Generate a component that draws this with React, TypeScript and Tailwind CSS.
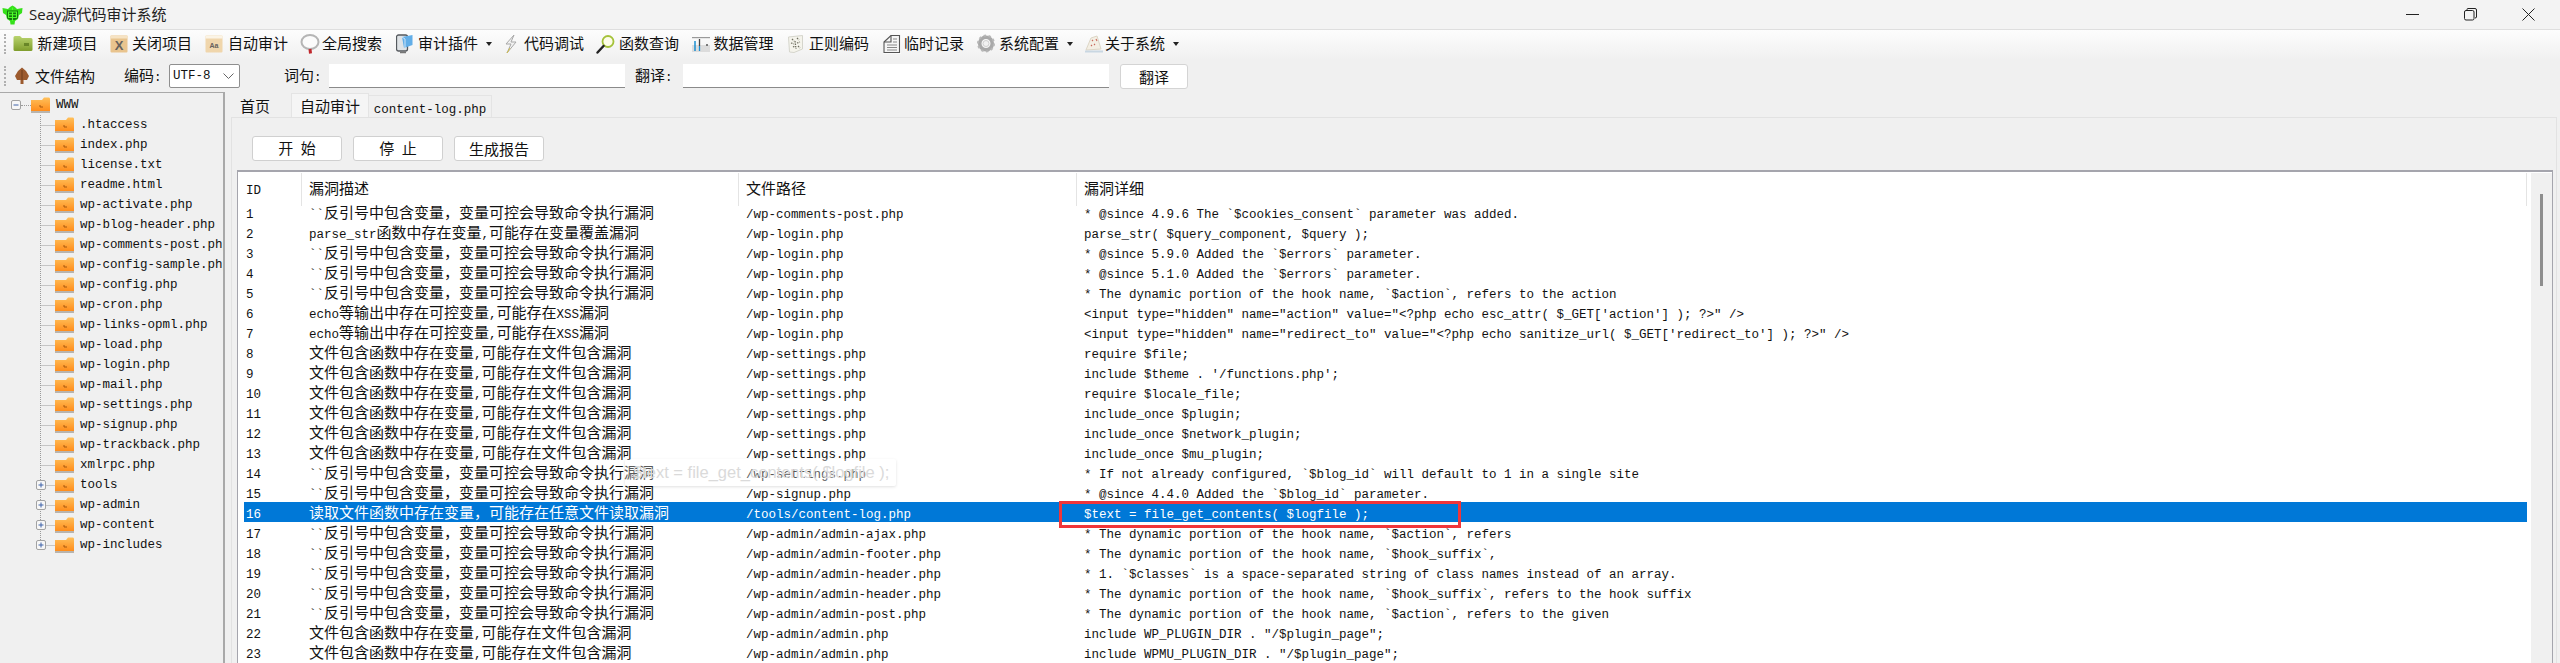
import React from 'react'

const LATIN = "font-['Liberation_Mono',monospace] text-[12.5px]"

// SimSun-like mix: latin runs are half the width of the CJK ones
function T({ children }: { children: string }) {
  return (
    <>
      {children.split(/([\u0000-\u00ff]+)/).map((run, i) =>
        /^[\u0000-\u00ff]+$/.test(run) ? (
          <span key={i} className={LATIN}>{run}</span>
        ) : (
          <span key={i}>{run}</span>
        ),
      )}
    </>
  )
}

function Logo() {
  return (
    <svg width="21" height="20" viewBox="0 0 21 20" className="shrink-0">
      <path d="M10.500 0.500 L13 2 L15 4 L20.500 3 L20 8 L17 10 L16 14 L13 16 L12.500 19.500 L8.500 19.500 L8 16 L5 14 L4 10 L1 8 L0.500 3 L6 4 L8 2 Z" fill="#35e01a" />
      <path d="M5 5.500 H16 V13 L13 15 H8 L5 13 Z" fill="#16720f" />
      <path d="M10.500 2.500 V5 M6.500 7 H14.500 V12.500 H6.500 Z M10.500 7 V16 M6.500 9.800 H14.500" stroke="#4dff2a" strokeWidth="1.100" fill="none" />
    </svg>
  )
}

function IconNew() {
  return (
    <svg width="20" height="17" viewBox="0 0 20 17">
      <defs>
        <linearGradient id="gn" x1="0" y1="0" x2="0" y2="1">
          <stop offset="0" stopColor="#b9d46f" />
          <stop offset="1" stopColor="#7f9d2c" />
        </linearGradient>
      </defs>
      <path d="M0.500 2.500 Q0.500 1 2 1 H7 L9 3 H18 Q19.500 3 19.500 4.500 V14.500 Q19.500 16 18 16 H2 Q0.500 16 0.500 14.500 Z" fill="url(#gn)" />
      <rect x="11" y="8" width="5" height="3" fill="#5c7a1f" opacity=".8" />
    </svg>
  )
}

function IconTan({ label, light }: { label: string; light?: boolean }) {
  return (
    <svg width="18" height="18" viewBox="0 0 18 18">
      <rect x="0.500" y="0.500" width="17" height="17" rx="1" fill={light ? '#f0d6ac' : '#e9c48e'} />
      <rect x="0.500" y="0.500" width="17" height="3" fill={light ? '#fbf4e6' : '#f6e3c4'} />
      <text x="9" y={light ? 13 : 15} textAnchor="middle" fontSize={light ? 7 : 13} fontWeight="700" fontFamily="Liberation Sans, sans-serif" fill="#66615c">
        {label}
      </text>
    </svg>
  )
}

function IconSearch() {
  return (
    <svg width="20" height="20" viewBox="0 0 20 20">
      <ellipse cx="10" cy="8" rx="8.500" ry="7" fill="#fbfbfb" stroke="#b5b5b5" strokeWidth="2" />
      <path d="M10 15 L10.500 19.500" stroke="#c0282d" strokeWidth="3" />
    </svg>
  )
}

function IconPlugin() {
  return (
    <svg width="18" height="20" viewBox="0 0 18 20">
      <rect x="0.500" y="1" width="11" height="16" rx="2" fill="#dfe3e6" stroke="#55595e" strokeWidth="1.300" />
      <path d="M4 18.500 H10" stroke="#777" strokeWidth="1.500" />
      <path d="M6 3 L16.500 1 V11 L8 14 Z" fill="#62aee8" />
      <path d="M6 3 L9 5 V14" fill="none" stroke="#cfe6f8" />
    </svg>
  )
}

function IconBolt() {
  return (
    <svg width="14" height="20" viewBox="0 0 14 20">
      <path d="M10 1 L2 10 L7 10 L3 19 L12 8 L7 8 Z" fill="#f2f2f2" stroke="#a8a8a8" strokeWidth="1" />
      <path d="M6 14 L3 19" stroke="#d4c14c" strokeWidth="1" />
    </svg>
  )
}

function IconLens() {
  return (
    <svg width="19" height="20" viewBox="0 0 19 20">
      <circle cx="12" cy="7.500" r="5.500" fill="#fdfde8" stroke="#a5c23a" strokeWidth="1.800" />
      <path d="M7.500 12 L1.500 18.500" stroke="#222" strokeWidth="2.400" strokeLinecap="round" />
    </svg>
  )
}

function IconData() {
  return (
    <svg width="18" height="16" viewBox="0 0 18 16">
      <rect x="0" y="9" width="18" height="7" fill="#dcdcdc" />
      <rect x="0" y="1" width="18" height="1.200" fill="#9a9a9a" />
      <path d="M3 5 V15" stroke="#1d8fd0" strokeWidth="1.500" />
      <path d="M7.500 3 V10" stroke="#444" strokeWidth="1.300" />
      <path d="M7.500 10 V15" stroke="#1d8fd0" strokeWidth="1.300" />
      <path d="M14 9 H16" stroke="#555" strokeWidth="1.500" />
    </svg>
  )
}

function IconRegex() {
  return (
    <svg width="15" height="18" viewBox="0 0 15 18">
      <path d="M0.500 2 L14.500 0.500 V14 L6 17.500 L1.500 17 Z" fill="#f5f4ec" stroke="#d5d5cc" />
      <path d="M4 4 L6 6 M9 3 L11 5 M3 8 L6 9 M9 8 L12 7 M5 12 L7 11 M10 11 L12 13 M7 6 L8 14" stroke="#6f6f60" strokeWidth="1.300" strokeDasharray="1.500 1" />
    </svg>
  )
}

function IconTemp() {
  return (
    <svg width="18" height="20" viewBox="0 0 18 20">
      <rect width="18" height="20" fill="#fafafa" />
      <path d="M1 8 L8 1.500 H16.500 V18.500 H1 Z" fill="#f6f6f6" stroke="#555" strokeWidth="1.100" />
      <path d="M1 8 H8 V1.500" fill="none" stroke="#555" strokeWidth="1.100" />
      <path d="M4 11 H14 M4 13.500 H14 M4 16 H14 M10 5 H14 M10 8 H14" stroke="#888" />
    </svg>
  )
}

function IconGear() {
  return (
    <svg width="18" height="19" viewBox="0 0 18 19">
      <circle cx="9" cy="9.500" r="6.300" fill="none" stroke="#a9a9a9" strokeWidth="3.600" />
      <circle cx="9" cy="9.500" r="8" fill="none" stroke="#b8b8b8" strokeWidth="2" strokeDasharray="2.500 2.500" />
      <circle cx="9" cy="9.500" r="3" fill="#f2f2f2" stroke="#d0d0d0" />
    </svg>
  )
}

function IconAbout() {
  return (
    <svg width="18" height="18" viewBox="0 0 18 18">
      <path d="M1 15 L6 3 L12 1 L16 14 Z" fill="#f4efe4" stroke="#ddd6c6" />
      <path d="M7 5 L8 6 M11 4 L12 6 M9 9 L10 10 M6 10 L7 11" stroke="#c8695c" strokeWidth="1.100" />
      <path d="M0 15.500 H18 V17.500 H0 Z" fill="#c9d7e2" />
    </svg>
  )
}

const toolbarItems = [
  { icon: <IconNew />, label: '新建项目', w: 'w-[97px]', slot: 'w-[24.5px]' },
  { icon: <IconTan label="X" />, label: '关闭项目', w: 'w-[95px]', slot: 'w-[22px]' },
  { icon: <IconTan label="Aa" light />, label: '自动审计', w: 'w-[95px]', slot: 'w-[23px]' },
  { icon: <IconSearch />, label: '全局搜索', w: 'w-[96px]', slot: 'w-[22px]' },
  { icon: <IconPlugin />, label: '审计插件', w: 'w-[108px]', slot: 'w-[22px]', arrow: true },
  { icon: <IconBolt />, label: '代码调试', w: 'w-[92px]', slot: 'w-[20px]' },
  { icon: <IconLens />, label: '函数查询', w: 'w-[96px]', slot: 'w-[23px]' },
  { icon: <IconData />, label: '数据管理', w: 'w-[96px]', slot: 'w-[21.5px]' },
  { icon: <IconRegex />, label: '正则编码', w: 'w-[95px]', slot: 'w-[21px]' },
  { icon: <IconTemp />, label: '临时记录', w: 'w-[94px]', slot: 'w-[21px]' },
  { icon: <IconGear />, label: '系统配置', w: 'w-[108px]', slot: 'w-[22px]', arrow: true },
  { icon: <IconAbout />, label: '关于系统', w: 'w-[110px]', slot: 'w-[20px]', arrow: true },
]

const treeFiles = [
  '.htaccess', 'index.php', 'license.txt', 'readme.html', 'wp-activate.php', 'wp-blog-header.php',
  'wp-comments-post.php', 'wp-config-sample.php', 'wp-config.php', 'wp-cron.php', 'wp-links-opml.php',
  'wp-load.php', 'wp-login.php', 'wp-mail.php', 'wp-settings.php', 'wp-signup.php', 'wp-trackback.php',
  'xmlrpc.php',
]
const treeDirs = ['tools', 'wp-admin', 'wp-content', 'wp-includes']

const EXEC = '``反引号中包含变量，变量可控会导致命令执行漏洞'
const INC = '文件包含函数中存在变量,可能存在文件包含漏洞'
const XSS = 'echo等输出中存在可控变量,可能存在XSS漏洞'

const rows: [string, string, string][] = [
  [EXEC, '/wp-comments-post.php', '* @since 4.9.6 The `$cookies_consent` parameter was added.'],
  ['parse_str函数中存在变量,可能存在变量覆盖漏洞', '/wp-login.php', 'parse_str( $query_component, $query );'],
  [EXEC, '/wp-login.php', '* @since 5.9.0 Added the `$errors` parameter.'],
  [EXEC, '/wp-login.php', '* @since 5.1.0 Added the `$errors` parameter.'],
  [EXEC, '/wp-login.php', '* The dynamic portion of the hook name, `$action`, refers to the action'],
  [XSS, '/wp-login.php', `<input type="hidden" name="action" value="<?php echo esc_attr( $_GET['action'] ); ?>" />`],
  [XSS, '/wp-login.php', `<input type="hidden" name="redirect_to" value="<?php echo sanitize_url( $_GET['redirect_to'] ); ?>" />`],
  [INC, '/wp-settings.php', 'require $file;'],
  [INC, '/wp-settings.php', `include $theme . '/functions.php';`],
  [INC, '/wp-settings.php', 'require $locale_file;'],
  [INC, '/wp-settings.php', 'include_once $plugin;'],
  [INC, '/wp-settings.php', 'include_once $network_plugin;'],
  [INC, '/wp-settings.php', 'include_once $mu_plugin;'],
  [EXEC, '/wp-settings.php', '* If not already configured, `$blog_id` will default to 1 in a single site'],
  [EXEC, '/wp-signup.php', '* @since 4.4.0 Added the `$blog_id` parameter.'],
  ['读取文件函数中存在变量，可能存在任意文件读取漏洞', '/tools/content-log.php', '$text = file_get_contents( $logfile );'],
  [EXEC, '/wp-admin/admin-ajax.php', '* The dynamic portion of the hook name, `$action`, refers'],
  [EXEC, '/wp-admin/admin-footer.php', '* The dynamic portion of the hook name, `$hook_suffix`,'],
  [EXEC, '/wp-admin/admin-header.php', '* 1. `$classes` is a space-separated string of class names instead of an array.'],
  [EXEC, '/wp-admin/admin-header.php', '* The dynamic portion of the hook name, `$hook_suffix`, refers to the hook suffix'],
  [EXEC, '/wp-admin/admin-post.php', '* The dynamic portion of the hook name, `$action`, refers to the given'],
  [INC, '/wp-admin/admin.php', 'include WP_PLUGIN_DIR . "/$plugin_page";'],
  [INC, '/wp-admin/admin.php', 'include WPMU_PLUGIN_DIR . "/$plugin_page";'],
]

function Folder() {
  return (
    <svg width="19" height="16" viewBox="0 0 19 16" className="shrink-0">
      <defs>
        <linearGradient id="fd" x1="0" y1="0" x2="0" y2="1">
          <stop offset="0" stopColor="#ffc05a" />
          <stop offset="1" stopColor="#ff8d1c" />
        </linearGradient>
      </defs>
      <path d="M0 3 H11 L13 0.500 H18 Q19 0.500 19 2 V14 H0 Z" fill="url(#fd)" />
      <rect x="0" y="14" width="19" height="2" fill="#b9b4ad" />
      <path d="M9 8 V10 H12" stroke="#a8590f" fill="none" />
    </svg>
  )
}

function Expander({ open }: { open?: boolean }) {
  return (
    <svg width="10" height="10" viewBox="0 0 10 10" className="shrink-0">
      <rect x="0.500" y="0.500" width="9" height="9" rx="1.500" fill="#f7f7f7" stroke="#a2a2a2" />
      <path d={open ? 'M2.500 5 H7.500' : 'M2.500 5 H7.500 M5 2.500 V7.500'} stroke="#3f62a8" />
    </svg>
  )
}

// dotted guide from the trunk at x=40 to the folder at x=55
function Guide({ last, dir }: { last?: boolean; dir?: boolean }) {
  return (
    <svg width="19" height="20" viewBox="0 0 19 20" className="shrink-0">
      <path d={`M4.500 0 V${last ? 10 : 20} M4.500 10.500 H19`} stroke="#9a9a9a" strokeDasharray="1 1" fill="none" />
      {dir && (
        <g transform="translate(0 5)">
          <rect x="0.500" y="0.500" width="9" height="9" rx="1.500" fill="#f7f7f7" stroke="#a2a2a2" />
          <path d="M2.500 5 H7.500 M5 2.500 V7.500" stroke="#3f62a8" />
        </g>
      )}
    </svg>
  )
}

function Tree() {
  return (
    <div className="w-[225px] shrink-0 mt-[2px] pt-[2px] border-t border-r-2 border-[#a9a9a9] overflow-hidden whitespace-pre text-[#111]">
      <div className="h-5 flex items-center pl-[11px]">
        <Expander open />
        <span className="w-[10px] border-t border-dotted border-[#9a9a9a]" />
        <Folder />
        <span className={`ml-[6px] ${LATIN}`}>WWW</span>
      </div>
      {treeFiles.map((f) => (
        <div key={f} className="h-5 flex items-center pl-[36px]">
          <Guide />
          <Folder />
          <span className={`ml-[6px] ${LATIN}`}>{f}</span>
        </div>
      ))}
      {treeDirs.map((d, i) => (
        <div key={d} className="h-5 flex items-center pl-[36px]">
          <Guide dir last={i === treeDirs.length - 1} />
          <Folder />
          <span className={`ml-[6px] ${LATIN}`}>{d}</span>
        </div>
      ))}
    </div>
  )
}

function ActionButton({ label }: { label: string }) {
  return (
    <button className="w-[90px] h-[25px] bg-white border border-[#d0d0d0] rounded-[3px] text-[15px] leading-none text-[#111]">
      <T>{label}</T>
    </button>
  )
}

function Caret() {
  return <span className="ml-[8px] w-0 h-0 border-x-[3.500px] border-x-transparent border-t-[4px] border-t-[#222]" />
}

export default function App() {
  return (
    <div className="w-[2560px] h-[663px] overflow-hidden flex flex-col bg-[#f0f0f0] text-[15px] text-[#111] font-['Noto_Sans_CJK_SC',sans-serif]">
      {/* title bar */}
      <div className="h-[30px] shrink-0 flex items-center bg-[#f3f3f3] border-b border-[#dedede] pl-[2px] pr-[3px]">
        <Logo />
        <span className="ml-[6px] text-[15px] font-['Open_Sans','Noto_Sans_CJK_SC',sans-serif] text-[#222]">Seay源代码审计系统</span>
        <div className="ml-auto flex">
          <div className="w-[58px] flex items-center justify-center">
            <svg width="13" height="13" viewBox="0 0 13 13"><path d="M0 6.500 H13" stroke="#222" /></svg>
          </div>
          <div className="w-[58px] flex items-center justify-center">
            <svg width="13" height="13" viewBox="0 0 13 13" fill="none" stroke="#222">
              <rect x="0.500" y="2.500" width="9.500" height="9.500" rx="1.500" />
              <path d="M3 2.500 V1.500 Q3 0.500 4 0.500 H11 Q12.500 0.500 12.500 2 V9 Q12.500 10 11 10" />
            </svg>
          </div>
          <div className="w-[58px] flex items-center justify-center">
            <svg width="13" height="13" viewBox="0 0 13 13"><path d="M0.500 0.500 L12.500 12.500 M12.500 0.500 L0.500 12.500" stroke="#222" /></svg>
          </div>
        </div>
      </div>

      {/* main toolbar */}
      <div className="h-[30px] shrink-0 flex items-center pl-[4px] pb-[3px] bg-gradient-to-b from-[#fdfdfd] to-[#f0f0f0]">
        <span className="w-[2px] h-[20px] border-l-2 border-dotted border-[#b0b0b0] mr-[7px]" />
        {toolbarItems.map((item) => (
          <div key={item.label} className={`${item.w} shrink-0 flex items-center`}>
            <span className={`${item.slot} shrink-0 flex items-center`}>{item.icon}</span>
            <span>{item.label}</span>
            {item.arrow && <Caret />}
          </div>
        ))}
      </div>

      {/* search toolbar */}
      <div className="h-[30px] shrink-0 flex items-center pl-[4px] pt-[2px]">
        <span className="w-[2px] h-[20px] border-l-2 border-dotted border-[#b0b0b0]" />
        <svg width="16" height="18" viewBox="0 0 16 18" className="ml-[8px] shrink-0">
          <path d="M8 0.500 L12 4 L15 9 L13 13 H9.500 V17 H6.500 V13 H3 L1 9 L4 4 Z" fill="#9c5a2e" />
          <path d="M8 3 V13" stroke="#6e3a18" />
        </svg>
        <span className="ml-[5px] w-[60px]">文件结构</span>
        <span className="ml-[29px] w-[45px]"><T>编码:</T></span>
        <div className="w-[71px] h-[24px] flex items-center justify-between pl-[3px] pr-[5px] bg-white border border-[#8f8f8f] rounded-[2px]">
          <span className={LATIN}>UTF-8</span>
          <svg width="11" height="7" viewBox="0 0 11 7"><path d="M0.500 0.500 L5.500 5.500 L10.500 0.500" fill="none" stroke="#666" /></svg>
        </div>
        <span className="ml-[44px] w-[45px]"><T>词句:</T></span>
        <input className="w-[296px] h-[24px] bg-white border-b border-[#8a8a8a] outline-none" />
        <span className="ml-[10px] w-[48px]"><T>翻译:</T></span>
        <input className="w-[426px] h-[24px] bg-white border-b border-[#8a8a8a] outline-none" />
        <button className="ml-[11px] w-[68px] h-[25px] bg-white border border-[#d4d4d4] rounded-[3px] leading-none">翻译</button>
      </div>

      {/* body */}
      <div className="flex-1 min-h-0 flex">
        <Tree />
        <div className="flex-1 min-w-0 flex flex-col pl-[6px] pr-[3px] pt-[3px]">
          <div className="h-[24px] shrink-0 flex items-end pl-[2px]">
            <div className="w-[58px] h-[24px] pl-[7px] leading-[26px]">首页</div>
            <div className="w-[78px] h-[24px] text-center leading-[24px] bg-[#f5f5f5] border-x border-t border-[#e4e4e4]">自动审计</div>
            <div className="w-[123px] h-[22px] text-center leading-[22px] border-r border-t border-[#e4e4e4] whitespace-pre"><span className={LATIN}>content-log.php</span></div>
          </div>
          <div className="flex-1 min-h-0 flex flex-col border-l border-t border-r border-[#e2e2e2]">
            <div className="shrink-0 flex gap-[11px] pl-[20px] pt-[18px]">
              <ActionButton label="开 始" />
              <ActionButton label="停 止" />
              <ActionButton label="生成报告" />
            </div>
            <div className="relative flex-1 min-h-0 mt-[9px] ml-[5px] mr-[3px] flex bg-white border-t-2 border-x border-[#a5a5ad]">
              <div className="flex-1 min-w-0 pl-[6px] overflow-hidden">
                <div className="h-[30px] grid grid-cols-[65px_437px_338px_1fr] leading-[30px] pt-[1px]">
                  <div className="pl-[2px]"><span className={LATIN}>ID</span></div>
                  <div className="border-l border-[#e4e4e4] pl-[7px] -ml-[8px]">漏洞描述</div>
                  <div className="border-l border-[#e4e4e4] pl-[7px] -ml-[8px]">文件路径</div>
                  <div className="border-x border-[#e4e4e4] pl-[7px] -ml-[8px]">漏洞详细</div>
                </div>
                {rows.map(([desc, path, detail], i) => (
                  <div
                    key={i}
                    className={`h-5 leading-5 grid grid-cols-[65px_437px_338px_1fr] whitespace-pre ${i === 15 ? 'bg-[#0078d7] text-white' : ''}`}
                  >
                    <div className="pl-[2px]"><span className={LATIN}>{i + 1}</span></div>
                    <div><T>{desc}</T></div>
                    <div><T>{path}</T></div>
                    <div><T>{detail}</T></div>
                  </div>
                ))}
              </div>
              <div className="w-[21px] ml-[4px] shrink-0 mt-px bg-[#f0f0f0] pt-[21px] flex justify-center">
                <div className="w-[3px] h-[92px] bg-[#8e8e8e]" />
              </div>

              {/* drag ghost of the selected line */}
              <div className="absolute left-[387px] top-[287px] w-[271px] h-[27px] pl-[8px] bg-white/30 rounded-[2px] shadow-[0_1px_3px_rgba(0,0,0,0.12)] text-[16.5px] leading-[27px] text-[#dadada] whitespace-pre font-['Liberation_Sans',sans-serif]">
                {'$text = file_get_contents( $logfile );'}
              </div>
              {/* red annotation */}
              <div className="absolute left-[821px] top-[329px] w-[402px] h-[27px] border-[3px] border-[#f0363a]" />
            </div>
          </div>
        </div>
      </div>
    </div>
  )
}
